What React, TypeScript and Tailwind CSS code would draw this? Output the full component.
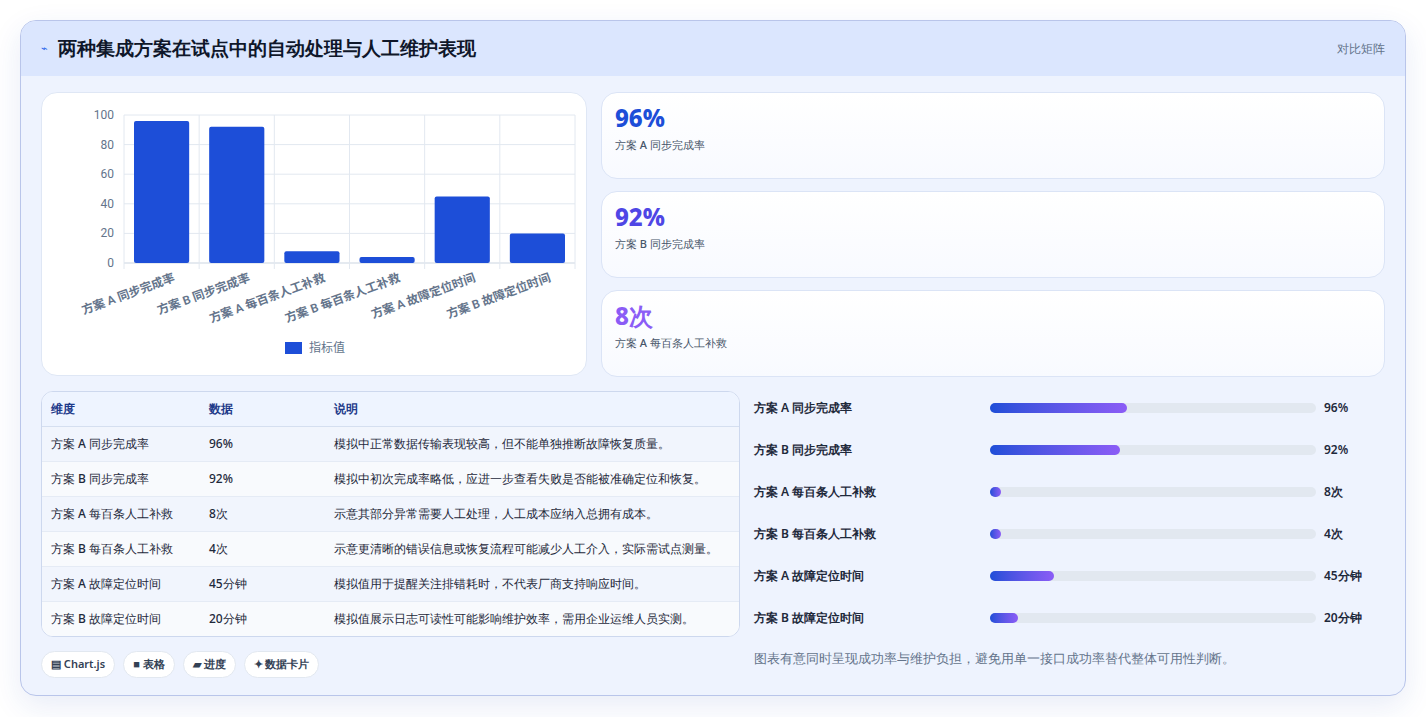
const font = "font-['Inter','Noto_Sans_CJK_SC',sans-serif]";

const rows = [
  { name: "方案 A 同步完成率", value: "96%", note: "模拟中正常数据传输表现较高，但不能单独推断故障恢复质量。", v: 96, pct: 42 },
  { name: "方案 B 同步完成率", value: "92%", note: "模拟中初次完成率略低，应进一步查看失败是否能被准确定位和恢复。", v: 92, pct: 40 },
  { name: "方案 A 每百条人工补救", value: "8次", note: "示意其部分异常需要人工处理，人工成本应纳入总拥有成本。", v: 8, pct: 3.5 },
  { name: "方案 B 每百条人工补救", value: "4次", note: "示意更清晰的错误信息或恢复流程可能减少人工介入，实际需试点测量。", v: 4, pct: 3.5 },
  { name: "方案 A 故障定位时间", value: "45分钟", note: "模拟值用于提醒关注排错耗时，不代表厂商支持响应时间。", v: 45, pct: 19.5 },
  { name: "方案 B 故障定位时间", value: "20分钟", note: "模拟值展示日志可读性可能影响维护效率，需用企业运维人员实测。", v: 20, pct: 8.7 },
];

function Chart() {
  const x0 = 82, x1 = 533, y0 = 170, yTop = 22;
  const cw = (x1 - x0) / 6;
  const yOf = (v: number) => y0 - ((y0 - yTop) * v) / 100;
  return (
    <svg width="546" height="284" className="block">
      {[0, 20, 40, 60, 80, 100].map((t) => (
        <g key={t}>
          <line x1={x0} x2={x1} y1={yOf(t)} y2={yOf(t)} stroke={t === 0 ? "#cbd5e1" : "#e2e8f0"} />
          <text x={x0 - 10} y={yOf(t) + 4} textAnchor="end" fontSize="12" fill="#64748b" fontFamily="Roboto, sans-serif">{t}</text>
        </g>
      ))}
      {Array.from({ length: 7 }).map((_, i) => (
        <line key={i} x1={x0 + i * cw} x2={x0 + i * cw} y1={yTop} y2={y0 + 6} stroke="#e2e8f0" />
      ))}
      {rows.map((r, i) => (
        <g key={r.name}>
          <rect x={x0 + i * cw + 10} y={yOf(r.v)} width={cw - 20} height={y0 - yOf(r.v)} rx="2" fill="#1d4ed8" />
          <text
            transform={`translate(${x0 + i * cw + cw / 2 + 14}, ${y0 + 18}) rotate(-20)`}
            textAnchor="end"
            fontSize="12"
            fontWeight="600"
            fill="#64748b"
            fontFamily="Roboto, 'Noto Sans CJK SC', sans-serif"
          >
            {r.name}
          </text>
        </g>
      ))}
      <rect x="243" y="249" width="17" height="12" fill="#1d4ed8" />
      <text x="267" y="259" fontSize="12" fill="#64748b" fontFamily="Roboto, 'Noto Sans CJK SC', sans-serif">指标值</text>
    </svg>
  );
}

const stats = [
  { v: "96%", label: "方案 A 同步完成率", c: "text-[#1d4ed8]" },
  { v: "92%", label: "方案 B 同步完成率", c: "text-[#4f46e5]" },
  { v: "8次", label: "方案 A 每百条人工补救", c: "text-[#8b5cf6]" },
];

export default function App() {
  return (
    <div className={`${font} min-h-[717px] bg-white pt-5 px-5`}>
      <div className="w-[1386px] h-[676px] rounded-2xl border border-[#b9c5ea] bg-[#eef3fe] shadow-[0_10px_30px_rgba(30,64,175,0.1)] overflow-hidden">
        <div className="h-[55px] bg-[#dbe6fe] flex items-center justify-between px-5">
          <div className="flex items-center gap-2.5">
            <span className="text-[#2563eb] text-[11px]">⌁</span>
            <h1 className="text-[19px] font-bold text-[#0f172a]">两种集成方案在试点中的自动处理与人工维护表现</h1>
          </div>
          <span className="text-[12px] text-[#64748b]">对比矩阵</span>
        </div>
        <div className="px-5 pt-4">
          <div className="flex gap-[14px]">
            <div className="w-[546px] h-[284px] bg-white rounded-2xl border border-[#dfe7f5]">
              <Chart />
            </div>
            <div className="flex-1 flex flex-col gap-[12px]">
              {stats.map((s) => (
                <div key={s.v} className="h-[87px] rounded-2xl border border-[#dbe4f6] bg-gradient-to-b from-white to-[#f8faff] px-[13px] pt-[9px]">
                  <div className={`text-[24px] font-extrabold leading-[32px] ${s.c}`}>{s.v}</div>
                  <div className="text-[11px] text-[#475569] mt-[3px] font-medium">{s.label}</div>
                </div>
              ))}
            </div>
          </div>
          <div className="flex gap-[14px] mt-[14px]">
            <div className="w-[699px]">
              <div className="rounded-xl border border-[#cdd8ee] overflow-hidden bg-white">
                <table className="w-full text-[12px] text-[#1e293b]">
                  <thead>
                    <tr className="bg-[#eef4ff] text-[#1e3a8a] text-left h-[34px] border-b border-[#d5dff0]">
                      <th className="font-semibold pl-[9px] w-[167px]">维度</th>
                      <th className="font-semibold w-[125px]">数据</th>
                      <th className="font-semibold">说明</th>
                    </tr>
                  </thead>
                  <tbody>
                    {rows.map((r, i) => (
                      <tr key={r.name} className={`h-[35px] border-b border-[#e5ebf5] last:border-b-0 ${i % 2 === 0 ? "bg-[#f1f5fd]" : "bg-[#f8fafd]"}`}>
                        <td className="pl-[9px] font-medium">{r.name}</td>
                        <td className="font-medium">{r.value}</td>
                        <td className="font-medium">{r.note}</td>
                      </tr>
                    ))}
                  </tbody>
                </table>
              </div>
              <div className="flex gap-2 mt-[14px]">
                {["▤ Chart.js", "■ 表格", "▰ 进度", "✦ 数据卡片"].map((c) => (
                  <span key={c} className="h-[27px] px-[9px] rounded-full border border-[#e2e8f0] bg-white text-[11px] font-semibold text-[#334155] flex items-center">{c}</span>
                ))}
              </div>
            </div>
            <div className="flex-1 -mt-[4px]">
              {rows.map((r) => (
                <div key={r.name} className="h-[42px] flex items-center text-[12px] font-semibold text-[#1e293b]">
                  <span className="w-[236px]">{r.name}</span>
                  <div className="w-[326px] h-[10px] rounded-full bg-[#e2e8f0]">
                    <div className="h-full rounded-full bg-gradient-to-r from-[#1d4ed8] to-[#8b5cf6]" style={{ width: `${r.pct}%` }} />
                  </div>
                  <span className="ml-[8px]">{r.value}</span>
                </div>
              ))}
              <p className="mt-[10px] text-[13px] text-[#64748b]">图表有意同时呈现成功率与维护负担，避免用单一接口成功率替代整体可用性判断。</p>
            </div>
          </div>
        </div>
      </div>
    </div>
  );
}
